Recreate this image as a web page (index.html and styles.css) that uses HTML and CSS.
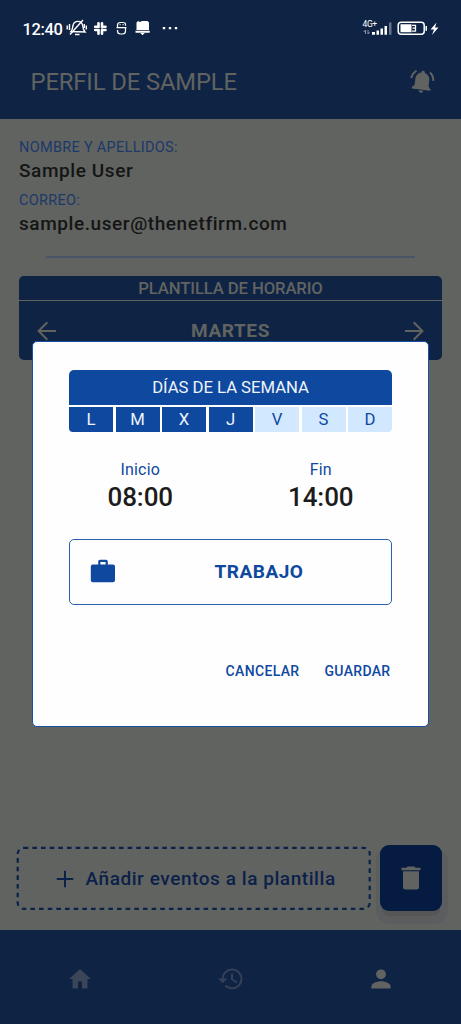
FILE: index.html
```
<!DOCTYPE html>
<html lang="es">
<head>
<meta charset="utf-8">
<title>Perfil</title>
<link rel="stylesheet" href="styles.css">
</head>
<body>
<div class="app">
  <header class="header">
    <div class="status">
      <span class="clock">12:40</span>
      <svg class="status-left" width="112" height="20" viewBox="0 0 112 20" fill="none" stroke="#fff" stroke-width="1.4">
        <path d="M5 13.500C6.500 12 6.500 10 7 7.500 7.500 4.500 10 3.400 12 3.400c2.500 0 4.200 1.300 4.700 4.200.300 2.500.600 4.600 2.300 6.400z"/>
        <path d="M9 16.500h4.500M4 16.500L17 2M1.200 7.500v4M3.500 6v6M18.300 6v4M20.300 7.500v4"/>
        <g stroke-width="2.600" stroke-linecap="round"><path d="M32.500 5.200v3.200M36 5.200v4M29.200 8.800h3.500M36 8.800h3.500M29.200 12h3.500M36 12h3.500M32.500 12.500v3.200M36 12.500v3.200"/></g>
        <path d="M59.500 7.800V6.500Q59.500 4.500 57 4.500h-2.500Q51.500 4.500 51.500 7v1.500q0 1 1.200 1h5.600q1.200 0 1.200 1V13Q59.500 16 56.500 16h-2Q51.500 16 51.500 13v-1M50.500 9.600h10" stroke-width="1.200"/>
        <path d="M53.500 6.700h1.200M56.500 6.700h1.200" stroke-width="1"/>
        <path d="M72 3l2 1 2-1h5.500l1.500 1.500V12H70.500V4.500zM69.500 12.700h14.200v2.100H69.500zM74.300 15h4.500l-2.300 2.300z" fill="#fff" stroke="none"/>
        <path d="M96.800 10.200h2.400M102.800 10.200h2.400M108.800 10.200h2.400" stroke-width="2.200"/>
      </svg>
      <span class="network">4G+</span>
      <svg class="status-right" width="78" height="20" viewBox="0 0 78 20" fill="none">
        <path d="M2.500 16v-4L.8 14M5 12v4l1.500-2" stroke="#8a94a5"/>
        <path d="M9 14h3v2.800H9zM13.500 12.500H16v4.300h-2.500zM17.500 10.500H20v6.300h-2.500zM21.500 8H24v8.800h-2.500z" fill="#fff"/>
        <path d="M26 4.500h2.500v12.300H26z" fill="#66738a"/>
        <rect x="35.200" y="4.200" width="26" height="12" rx="3" stroke="#fff" stroke-width="1.500"/>
        <path d="M37.500 6.200h11v8h-11zM62.500 8H64v4.800h-1.500z" fill="#fff"/>
        <path d="M49 7.300h3.500v5.900H49M49.500 10.200h3" stroke="#fff" stroke-width="1.300"/>
        <path d="M73.500 4.500L67.500 11.500H71L69 17l6.500-7.500H72z" fill="#fff"/>
      </svg>
    </div>
    <div class="titlebar">
      <h1>PERFIL DE SAMPLE</h1>
      <svg width="26" height="26" viewBox="0 0 26 26" fill="#616361">
        <g transform="rotate(7 13 13)"><path d="M13 1.700c1.100 0 1.700.8 1.700 1.900 3.400.8 5.300 3.500 5.300 7v6l2.400 2.700v1.300H3.600v-1.300L6 16.600v-6c0-3.500 1.900-6.200 5.300-7 0-1.100.6-1.900 1.700-1.900zM10.800 21.600h4.500a2.250 2.250 0 0 1-4.500 0z"/>
        <path d="M2 10.500C2.200 7 3.500 4.500 6.200 2.500M24 10.500C23.800 7 22.500 4.500 19.800 2.500" fill="none" stroke="#616361" stroke-width="2"/></g>
      </svg>
    </div>
  </header>

  <main class="content">
    <section class="person">
      <p class="label">NOMBRE Y APELLIDOS:</p>
      <p class="value">Sample User</p>
      <p class="label second">CORREO:</p>
      <p class="value">sample.user@thenetfirm.com</p>
    </section>
    <div class="divider"></div>
    <section class="template">
      <h2>PLANTILLA DE HORARIO</h2>
      <div class="day">
        <svg width="20" height="20" viewBox="0 0 20 20" fill="none" stroke="#616361" stroke-width="2"><path d="M19 10H2M10.300 1.300L1.600 10l8.700 8.700"/></svg>
        <span>MARTES</span>
        <svg width="20" height="20" viewBox="0 0 20 20" fill="none" stroke="#616361" stroke-width="2"><path d="M1 10h17M9.700 1.300L18.400 10l-8.700 8.700"/></svg>
      </div>
    </section>
    <div class="actions">
      <div class="add">
        <svg class="outline" width="356" height="65" viewBox="0 0 356 65"><rect x="1.700" y="1.800" width="352" height="61" rx="6" fill="none" stroke="#0b2149" stroke-width="2.200" stroke-dasharray="4.600 4.060"/></svg>
        <svg width="18" height="18" viewBox="0 0 18 18" stroke="#0b2149" stroke-width="2"><path d="M9 .8v16.400M.8 9h16.400"/></svg>
        <span>Añadir eventos a la plantilla</span>
      </div>
      <div class="trash">
        <svg width="20" height="24" viewBox="0 0 20 24" fill="#616361"><path d="M.5 1.800h5L6.500.5h7l1 1.300h5v2.500H.5zM2 5.300h16V21q0 2.500-2.500 2.500h-11Q2 23.500 2 21z"/></svg>
      </div>
    </div>
  </main>

  <nav class="nav">
    <svg width="24" height="24" viewBox="0 0 24 24" fill="#3b4558"><path d="M10 21.500v-7h4v7h5.500V12H23L12 2 1 12h3.500v9.500z"/></svg>
    <svg width="26" height="24" viewBox="0 0 26 24" fill="none" stroke="#344055" stroke-width="2"><path d="M4.700 12A9.400 9.400 0 1 1 14.200 21.300Q10 21.300 7.300 18.500M14 6.500v6l5 3"/><path d="M0 11.500h9.400l-4.700 4.700z" fill="#344055" stroke="none"/></svg>
    <svg width="24" height="24" viewBox="0 0 24 24" fill="#616361"><circle cx="12" cy="7.300" r="4.900"/><path d="M2.400 21.500v-2.400c0-3.200 6.400-4.900 9.600-4.900s9.600 1.700 9.600 4.900v2.400z"/></svg>
  </nav>

  <div class="dialog">
    <div class="week">
      <div class="week-title">DÍAS DE LA SEMANA</div>
      <div class="days">
        <span class="on">L</span><span class="on">M</span><span class="on">X</span><span class="on">J</span><span>V</span><span>S</span><span>D</span>
      </div>
    </div>
    <div class="times">
      <div><p class="time-label">Inicio</p><p class="time">08:00</p></div>
      <div><p class="time-label">Fin</p><p class="time">14:00</p></div>
    </div>
    <div class="type">
      <svg width="26" height="24" viewBox="0 0 26 24" fill="#0f489f"><path fill-rule="evenodd" d="M10 .8h6q1.800 0 1.800 1.800v3H23q2 0 2 2v13.600q0 2-2 2H2.800q-2 0-2-2V7.600q0-2 2-2h5.400v-3Q8.200.8 10 .8zm.4 2.200v2.600h5.200V3z"/></svg>
      <span>TRABAJO</span>
    </div>
    <div class="buttons"><span>CANCELAR</span><span>GUARDAR</span></div>
  </div>
</div>
</body>
</html>
```
FILE: styles.css
```
* { box-sizing: border-box; }
body { margin: 0; font-family: Roboto, sans-serif; background: #616361; }
h1, h2, p { margin: 0; }
svg { display: block; flex: none; }

.app {
  position: relative;
  width: 461px;
  height: 1024px;
  display: flex;
  flex-direction: column;
  overflow: hidden;
}

.header { height: 119px; background: #0f2344; flex: none; }
.status { display: flex; height: 56px; padding: 18px 0 0 22.5px; color: #fff; }
.clock { width: 43px; font-size: 16.5px; font-weight: 500; line-height: 23px; letter-spacing: -.35px; }
.network { margin-left: 185px; width: 15px; font-size: 8.5px; font-weight: 400; line-height: 12px; letter-spacing: -.4px; white-space: nowrap; }
.status-right { margin-left: -15px; }
.titlebar {
  display: flex;
  align-items: center;
  justify-content: space-between;
  height: 51px;
  padding: 0 26px 0 30.5px;
}
.titlebar h1 { font-size: 23.8px; font-weight: 400; letter-spacing: -.12px; color: #616361; }

.content { flex: 1; display: flex; flex-direction: column; padding: 17px 19px 13px; }
.label { font-size: 14.5px; line-height: 24px; height: 22px; letter-spacing: .3px; color: #1b3969; }
.label.second { margin-top: 6px; }
.value { font-size: 19px; font-weight: 500; line-height: 25px; letter-spacing: .58px; color: #141514; }
.divider { height: 2px; margin: 20px 27px 0; background: #495468; }

.template { margin-top: 18px; height: 84px; border-radius: 5px; background: #0f2344; color: #616361; }
.template h2 {
  height: 25px;
  border-bottom: 1px solid #616361;
  text-align: center;
  font-size: 16.7px;
  font-weight: 500;
  line-height: 25px;
  letter-spacing: -.12px;
}
.day { display: flex; align-items: center; justify-content: space-between; height: 59px; padding: 0 18px; }
.day span { font-size: 19px; font-weight: 700; letter-spacing: .6px; }

.actions { display: flex; margin: auto -1px 0 -3px; height: 72px; }
.add {
  position: relative;
  display: flex;
  align-items: center;
  width: 356px;
  height: 65px;
  margin-top: 1px;
  padding-left: 40px;
  gap: 11.5px;
  color: #0b2149;
  font-size: 19px;
  font-weight: 500;
  letter-spacing: .56px;
  white-space: nowrap;
}
.outline { position: absolute; inset: 0; }
.trash {
  display: flex;
  align-items: center;
  justify-content: center;
  width: 62px;
  height: 66px;
  margin-left: 8px;
  border-radius: 9px;
  background: #051b42;
  box-shadow: 0 7px 0 -2px #555655, 1px 8px 0 5px #5c5d5e;
}

.nav { flex: none; display: flex; height: 94px; padding: 37px 68px 0; justify-content: space-between; background: #0f2344; }

.dialog {
  position: absolute;
  left: 32px;
  top: 341px;
  width: 397px;
  height: 386px;
  padding: 28px 36px;
  border: 1.5px solid #1850a4;
  border-radius: 5px;
  background: #fefefe;
  color: #0f489f;
}
.week { display: grid; gap: 2px; }
.week-title { height: 35px; border-radius: 5px 5px 0 0; background: #0f489f; color: #eef4fc; text-align: center; font-size: 16.7px; line-height: 35px; letter-spacing: -.03px; }
.days { display: grid; grid-template-columns: repeat(7, 1fr); gap: 2.5px; height: 24px; }
.days span { background: #d2e8ff; text-align: center; font-size: 16.7px; line-height: 25px; }
.days .on { background: #0f489f; color: #eef4fc; }
.days span:first-child { border-radius: 0 0 0 4px; }
.days span:last-child { border-radius: 0 0 4px 0; }

.times { display: grid; grid-template-columns: 1fr 1fr; margin: 27px -19px 0; text-align: center; }
.time-label { font-size: 16px; line-height: 23px; height: 22px; letter-spacing: .2px; }
.time { font-size: 26px; font-weight: 500; line-height: 34px; letter-spacing: -.1px; color: #1c1c1c; }

.type { display: flex; align-items: center; height: 66px; margin-top: 25px; padding-left: 20px; border: 1.5px solid #2b60af; border-radius: 5px; }
.type svg { margin-bottom: 2px; }
.type span { flex: 1; padding-left: 11px; margin-bottom: 2px; text-align: center; font-size: 19px; font-weight: 700; letter-spacing: .5px; }

.buttons { display: flex; justify-content: flex-end; gap: 25px; margin-top: 55px; padding-right: 1.5px; font-size: 14px; font-weight: 500; line-height: 22px; letter-spacing: .33px; }
```
